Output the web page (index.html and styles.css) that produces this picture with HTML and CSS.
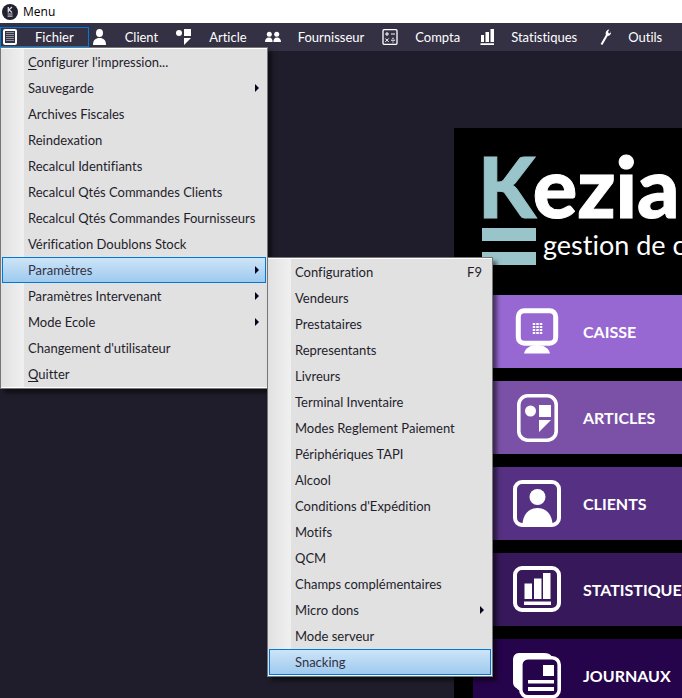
FILE: index.html
```html
<!DOCTYPE html>
<html lang="fr">
<head>
<meta charset="utf-8">
<title>Menu</title>
<link rel="stylesheet" href="styles.css">
</head>
<body>
<header class="titlebar">
  <svg class="app-icon" viewBox="0 0 16 16" aria-hidden="true">
    <circle cx="8" cy="8" r="8" fill="#232130"/>
    <path d="M6.3 3v5.4M10 3 7 5.7l3 2.7" fill="none" stroke="#d5dde0" stroke-width="1.3"/>
    <path d="M5.6 10h5M5.6 12.2h5" stroke="#c2cdd1" stroke-width="1.2"/>
  </svg>
  <span>Menu</span>
</header>

<nav class="menubar">
  <div class="menu">
    <button class="menu-button is-open" type="button">
      <svg viewBox="0 0 16 16" aria-hidden="true"><rect x="1" y="0" width="14" height="16" rx="2" fill="#fff"/><rect x="3" y="2" width="10" height="12" fill="#343144"/><path d="M4 3.500h8M4 5.500h8M4 7.500h8M4 9.500h8M4 11.500h8" stroke="#8f8d99"/></svg>
      <span>Fichier</span>
    </button>
    <div class="dropdown">
      <button class="item" type="button"><span><u>C</u>onfigurer l'impression...</span></button>
      <button class="item has-sub" type="button"><span>Sauvegarde</span></button>
      <button class="item" type="button"><span>Archives Fiscales</span></button>
      <button class="item" type="button"><span>Reindexation</span></button>
      <button class="item" type="button"><span>Recalcul Identifiants</span></button>
      <button class="item" type="button"><span>Recalcul Qtés Commandes Clients</span></button>
      <button class="item" type="button"><span>Recalcul Qtés Commandes Fournisseurs</span></button>
      <button class="item" type="button"><span>Vérification Doublons Stock</span></button>
      <div class="submenu">
        <button class="item has-sub is-active" type="button"><span>Paramètres</span></button>
        <div class="dropdown dropdown-side">
          <button class="item" type="button"><span>Configuration</span><kbd>F9</kbd></button>
          <button class="item" type="button"><span>Vendeurs</span></button>
          <button class="item" type="button"><span>Prestataires</span></button>
          <button class="item" type="button"><span>Representants</span></button>
          <button class="item" type="button"><span>Livreurs</span></button>
          <button class="item" type="button"><span>Terminal Inventaire</span></button>
          <button class="item" type="button"><span>Modes Reglement Paiement</span></button>
          <button class="item" type="button"><span>Périphériques TAPI</span></button>
          <button class="item" type="button"><span>Alcool</span></button>
          <button class="item" type="button"><span>Conditions d'Expédition</span></button>
          <button class="item" type="button"><span>Motifs</span></button>
          <button class="item" type="button"><span>QCM</span></button>
          <button class="item" type="button"><span>Champs complémentaires</span></button>
          <button class="item has-sub" type="button"><span>Micro dons</span></button>
          <button class="item" type="button"><span>Mode serveur</span></button>
          <button class="item is-active" type="button"><span>Snacking</span></button>
        </div>
      </div>
      <button class="item has-sub" type="button"><span>Paramètres Intervenant</span></button>
      <button class="item has-sub" type="button"><span>Mode Ecole</span></button>
      <button class="item" type="button"><span>Changement d'utilisateur</span></button>
      <button class="item" type="button"><span><u>Q</u>uitter</span></button>
    </div>
  </div>
  <button class="menu-button" type="button">
    <svg viewBox="0 0 16 16" aria-hidden="true"><g fill="#fff"><ellipse cx="7.500" cy="4" rx="3.500" ry="4"/><path d="M1 16c0-5 2.500-7 6.500-7s6.500 2 6.500 7z"/></g></svg>
    <span>Client</span>
  </button>
  <button class="menu-button" type="button">
    <svg viewBox="0 0 16 16" aria-hidden="true"><g fill="#fff"><circle cx="3" cy="4" r="3"/><path d="M8 0h7v7H8zM8 9h7l-7 7z"/></g></svg>
    <span>Article</span>
  </button>
  <button class="menu-button" type="button">
    <svg viewBox="0 0 16 16" aria-hidden="true"><g fill="#fff"><circle cx="4.300" cy="5.300" r="2.500"/><circle cx="11.700" cy="5.300" r="2.500"/><path d="M0 13c0-3 1.500-4.500 4-4.500S7.600 10 7.600 13zM8.400 13c0-3 1.200-4.500 3.600-4.500s4 1.500 4 4.500z"/></g></svg>
    <span>Fournisseur</span>
  </button>
  <button class="menu-button" type="button">
    <svg viewBox="0 0 16 16" aria-hidden="true"><g fill="none" stroke="#fff"><rect x="1" y=".7" width="14" height="14.600" rx="1" stroke-width="1.300"/><path d="M3 5h4M5 3v4M9 5h4M3.300 9.500l3.400 3.400M6.700 9.500l-3.400 3.400M9 11.200h4"/></g><path d="M10.400 8.800h1.200v1.200h-1.200zM10.400 12.400h1.200v1.200h-1.200z" fill="#fff"/></svg>
    <span>Compta</span>
  </button>
  <button class="menu-button" type="button">
    <svg viewBox="0 0 16 16" aria-hidden="true"><path d="M3 6h3v7H3zM7.500 3h3.500v10H7.500zM12.500 0H16v13h-3.500zM2.500 14.300H16V16H2.500z" fill="#fff"/></svg>
    <span>Statistiques</span>
  </button>
  <button class="menu-button" type="button">
    <svg viewBox="0 0 16 16" aria-hidden="true"><path d="M6.500 15.500 12 6" stroke="#fff" stroke-width="2" fill="none"/><path d="M10.700 5.500C10.300 2.500 12 .4 14.300.4L13 3l1 1.600 1.500-.6.500-2c.6 2.600-.8 5-3.700 5z" fill="#fff"/></svg>
    <span>Outils</span>
  </button>
</nav>

<main class="workspace">
  <section class="panel">
    <div class="logo">
      <h1 class="wordmark"><span class="initial">K</span>ezia</h1>
      <div class="tagline">
        <div class="bars"><i></i><i></i></div>
        <span>gestion de c</span>
      </div>
    </div>
    <div class="tiles">
      <button class="tile tile-caisse" type="button">
        <svg viewBox="0 0 48 48" aria-hidden="true"><rect x="5.300" y="2.800" width="37.400" height="32.400" rx="6" fill="none" stroke="#fff" stroke-width="5"/><path d="M11 45.500c1-5 6-8.500 13-8.500s12 3.500 13 8.500z" fill="#fff"/><path d="M21 15v11M24.500 15v11M28 15v11" stroke="#fff" stroke-width="2.500" stroke-dasharray="2 1"/></svg>
        <span>CAISSE</span>
      </button>
      <button class="tile tile-articles" type="button">
        <svg viewBox="0 0 48 48" aria-hidden="true"><rect x="5.800" y="1.800" width="37.400" height="44.400" rx="9" fill="none" stroke="#fff" stroke-width="3.600"/><g fill="#fff"><circle cx="17.500" cy="17" r="5.500"/><path d="M26 11h12v12H26zM26 26h12L26 38z"/></g></svg>
        <span>ARTICLES</span>
      </button>
      <button class="tile tile-clients" type="button">
        <svg viewBox="0 0 48 48" aria-hidden="true"><rect x="2" y="2" width="44" height="43" rx="7" fill="none" stroke="#fff" stroke-width="4"/><g fill="#fff"><circle cx="24.500" cy="17" r="8"/><path d="M9.500 45c0-10 6-17 15-17s15 7 15 17z"/></g></svg>
        <span>CLIENTS</span>
      </button>
      <button class="tile tile-stats" type="button">
        <svg viewBox="0 0 48 48" aria-hidden="true"><rect x="2" y="2" width="44" height="42" rx="7" fill="none" stroke="#fff" stroke-width="4"/><path d="M11.500 17.500h7.500V33h-7.500zM21 12.500h7.500V33H21zM30 7h7.500v26H30zM11 35.500h27V39H11z" fill="#fff"/></svg>
        <span>STATISTIQUES</span>
      </button>
      <button class="tile tile-journaux" type="button">
        <svg viewBox="0 0 48 48" aria-hidden="true"><path d="M6 1h25c4 0 6 1 7.500 3L9 39c-3-1-4-1-5-2.500C1 35 0 33 0 30V8c0-4 2-7 6-7z" fill="#fff"/><rect x="7.800" y="5.800" width="38.400" height="39" rx="7" fill="#26044b" stroke="#fff" stroke-width="3.600"/><path d="M30 13h11v11H30zM15 28h26v3.500H15zM15 35h26v4H15z" fill="#fff"/></svg>
        <span>JOURNAUX</span>
      </button>
    </div>
  </section>
</main>
</body>
</html>
```
FILE: styles.css
```css
* {
  box-sizing: border-box;
}

body {
  margin: 0;
  height: 100vh;
  display: flex;
  flex-direction: column;
  overflow: hidden;
  background: #1f1d2b;
  font-family: Lato, sans-serif;
  font-size: 13px;
  font-variant-ligatures: none;
  line-height: 20px;
}

button {
  margin: 0;
  border: 0;
  background: none;
  color: inherit;
  font: inherit;
  font-variant-ligatures: none;
  text-align: left;
  white-space: nowrap;
}

.titlebar {
  display: flex;
  flex: none;
  align-items: center;
  gap: 5px;
  height: 23px;
  padding: 0 2px;
  background: #fff;
  color: #000;
  font-family: "Open Sans", sans-serif;
  font-size: 12px;
}

.app-icon {
  width: 16px;
  height: 16px;
}

.menubar {
  display: flex;
  flex: none;
  align-items: flex-start;
  gap: 1px;
  height: 28px;
  padding-top: 4px;
  background: #343144;
  color: #fff;
}

.menu {
  position: relative;
}

.menu-button {
  display: flex;
  align-items: center;
  gap: 17px;
  height: 20px;
  padding: 0 15px 1px 2px;
}

.menu-button svg {
  flex: none;
  width: 16px;
  height: 16px;
}

.menu-button.is-open {
  outline: 1px solid #0078d7;
  outline-offset: -1px;
}

.dropdown {
  position: absolute;
  z-index: 2;
  top: 100%;
  left: 0;
  min-width: 268px;
  border: 1px solid #767676;
  background: linear-gradient(90deg, #e1e1e1, #f0f0f0 23px, #e1e1e1 23px);
  box-shadow: inset 0 1px #fff, inset 0 -1px #fff, 4px 4px 4px rgba(0, 0, 0, 0.5);
  padding: 1px;
  color: #1f1d2b;
}

.dropdown-side {
  top: 0;
  left: calc(100% + 1px);
  min-width: 226px;
}

.submenu {
  position: relative;
}

.item {
  display: flex;
  align-items: center;
  justify-content: space-between;
  width: 100%;
  height: 26px;
  padding: 0 9px 0 26px;
}

.item kbd {
  font: inherit;
}

.item u {
  text-underline-offset: 2px;
}

.item.has-sub::after {
  content: "";
  margin-right: -2px;
  border: 4px solid transparent;
  border-right: 0;
  border-left: 4px solid #07051c;
}

.item.is-active {
  border: 1px solid #0078d7;
  padding: 0 8px 0 25px;
  background: linear-gradient(#cde4f7, #9ecaef);
  color: #343144;
}

.workspace {
  flex: 1;
  min-height: 0;
  padding: 77px 0 0 454px;
}

.panel {
  height: 100%;
  overflow: hidden;
  background: #000;
  color: #fff;
}

.logo {
  height: 167px;
  padding: 18px 0 0 24px;
  white-space: nowrap;
}

.wordmark {
  margin: 0 0 2px;
  font-size: 83px;
  font-weight: 900;
  line-height: 80px;
  -webkit-text-stroke: 1px;
}

.initial {
  color: #99c4c9;
}

.tagline {
  display: flex;
  gap: 7px;
  padding-left: 4px;
  font-size: 27px;
  line-height: 34px;
}

.bars {
  display: grid;
  flex: none;
  gap: 11px;
  width: 54px;
}

.bars i {
  height: 13px;
  background: #99c4c9;
}

.tiles {
  display: grid;
  gap: 13px;
  padding-left: 19px;
}

.tile {
  display: flex;
  align-items: center;
  gap: 22px;
  height: 73px;
  padding: 0 0 0 40px;
  overflow: hidden;
  font-size: 16px;
  font-weight: 700;
}

.tile svg {
  flex: none;
  width: 48px;
  height: 48px;
}

.tile-caisse { background: #9768d1; }
.tile-articles { background: #7b51a8; }
.tile-clients { background: #563183; }
.tile-stats { background: #37185b; }
.tile-journaux { background: #26044b; }
```
